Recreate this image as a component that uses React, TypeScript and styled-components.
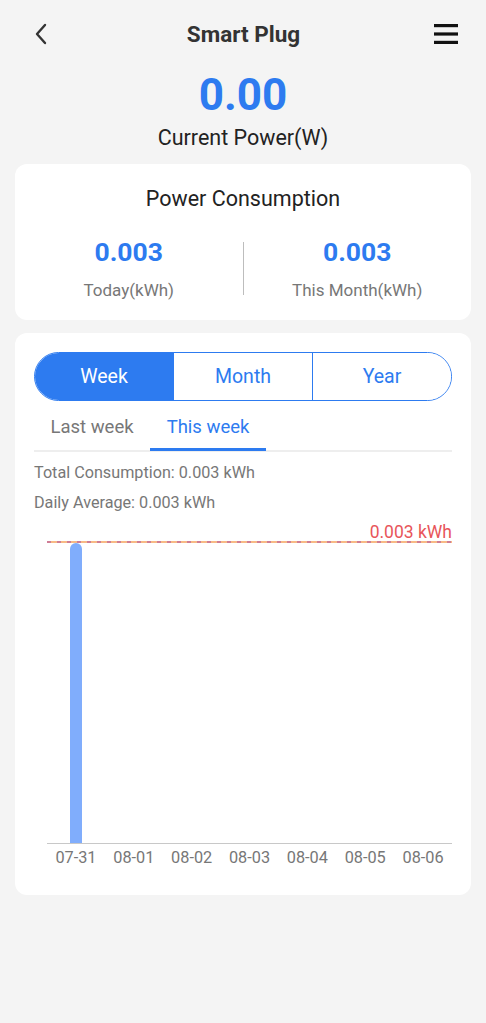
import React from "react";
import styled, { createGlobalStyle } from "styled-components";

const BLUE = "#2d7bf0";

const GlobalStyle = createGlobalStyle`
  html, body {
    margin: 0;
    padding: 0;
    background: #f4f4f4;
    font-family: Roboto, "Noto Sans", Arial, sans-serif;
  }
  * { box-sizing: border-box; }
`;

const days = ["07-31", "08-01", "08-02", "08-03", "08-04", "08-05", "08-06"];

const App: React.FC = () => {
  return (
    <Page>
      <GlobalStyle />
      <Header>
        <IconButton aria-label="back">
          <svg width="14" height="22" viewBox="0 0 14 22">
            <polyline
              points="11,2 3,11 11,20"
              fill="none"
              stroke="#333"
              strokeWidth="2.4"
              strokeLinecap="round"
              strokeLinejoin="round"
            />
          </svg>
        </IconButton>
        <Title>Smart Plug</Title>
        <IconButton aria-label="menu">
          <svg width="24" height="22" viewBox="0 0 24 22">
            <rect x="0" y="1" width="24" height="3.2" fill="#111" />
            <rect x="0" y="9.4" width="24" height="3.2" fill="#111" />
            <rect x="0" y="17.8" width="24" height="3.2" fill="#111" />
          </svg>
        </IconButton>
      </Header>

      <PowerBlock>
        <BigValue>0.00</BigValue>
        <PowerLabel>Current Power(W)</PowerLabel>
      </PowerBlock>

      <Card>
        <CardTitle>Power Consumption</CardTitle>
        <StatsRow>
          <Stat>
            <StatValue>0.003</StatValue>
            <StatLabel>Today(kWh)</StatLabel>
          </Stat>
          <Divider />
          <Stat>
            <StatValue>0.003</StatValue>
            <StatLabel>This Month(kWh)</StatLabel>
          </Stat>
        </StatsRow>
      </Card>

      <ChartCard>
        <Segmented>
          <Segment $active>Week</Segment>
          <Segment>Month</Segment>
          <Segment>Year</Segment>
        </Segmented>
        <TabBar>
          <Tab>Last week</Tab>
          <Tab $active>This week</Tab>
        </TabBar>
        <Info>
          <InfoLine>Total Consumption: 0.003 kWh</InfoLine>
          <InfoLine>Daily Average: 0.003 kWh</InfoLine>
        </Info>
        <Chart>
          <svg width="418" height="327" viewBox="0 0 418 327">
            <text
              x="418"
              y="20"
              textAnchor="end"
              fill="#e8555a"
              fontSize="17.5"
              fontFamily="Roboto, sans-serif"
            >
              0.003 kWh
            </text>
            <line x1="13" y1="24" x2="418" y2="24" stroke="#f4a35e" strokeWidth="1.5" />
            <line
              x1="13"
              y1="24"
              x2="418"
              y2="24"
              stroke="#c26a9c"
              strokeWidth="1.5"
              strokeDasharray="4 6"
            />
            <path d="M36 325 V31 a6 6 0 0 1 12 0 V325 Z" fill="#80adfc" />
            <line x1="13" y1="325.5" x2="418" y2="325.5" stroke="#c8c8c8" strokeWidth="1" />
          </svg>
          <Axis>
            {days.map((d) => (
              <AxisLabel key={d}>{d}</AxisLabel>
            ))}
          </Axis>
        </Chart>
      </ChartCard>
    </Page>
  );
};

export default App;

const Page = styled.div`
  width: 486px;
  min-height: 1023px;
  padding: 0 15px 40px;
  background: #f4f4f4;
`;

const Header = styled.div`
  height: 68px;
  display: flex;
  align-items: center;
  justify-content: space-between;
  padding: 0 11px 0 12px;
`;

const IconButton = styled.div`
  width: 28px;
  height: 28px;
  display: flex;
  align-items: center;
  justify-content: center;
`;

const Title = styled.div`
  font-size: 22.5px;
  font-weight: 700;
  color: #333;
`;

const PowerBlock = styled.div`
  display: flex;
  flex-direction: column;
  align-items: center;
  padding-top: 1px;
  margin-bottom: 13px;
`;

const BigValue = styled.div`
  font-size: 44px;
  font-weight: 700;
  line-height: 52px;
  color: ${BLUE};
`;

const PowerLabel = styled.div`
  margin-top: 4px;
  font-size: 21.5px;
  line-height: 26px;
  color: #222;
`;

const Card = styled.div`
  background: #fff;
  border-radius: 12px;
  padding: 23px 0 19px;
`;

const CardTitle = styled.div`
  text-align: center;
  font-size: 21.5px;
  line-height: 24px;
  color: #222;
  margin-bottom: 25px;
`;

const StatsRow = styled.div`
  display: flex;
  align-items: center;
`;

const Stat = styled.div`
  flex: 1;
  display: flex;
  flex-direction: column;
  align-items: center;
  gap: 11px;
`;

const StatValue = styled.div`
  font-size: 26.5px;
  font-weight: 700;
  line-height: 32px;
  color: ${BLUE};
`;

const StatLabel = styled.div`
  font-size: 17px;
  line-height: 22px;
  color: #777;
`;

const Divider = styled.div`
  width: 1px;
  height: 53px;
  background: #bdbdbd;
`;

const ChartCard = styled.div`
  margin-top: 13px;
  background: #fff;
  border-radius: 12px;
  padding: 19px 19px 26px;
`;

const Segmented = styled.div`
  display: flex;
  height: 49px;
  border: 1px solid ${BLUE};
  border-radius: 25px;
  overflow: hidden;
`;

const Segment = styled.div<{ $active?: boolean }>`
  flex: 1;
  display: flex;
  align-items: center;
  justify-content: center;
  font-size: 19.5px;
  color: ${(p) => (p.$active ? "#fff" : BLUE)};
  background: ${(p) => (p.$active ? BLUE : "#fff")};
  & + & {
    border-left: 1px solid ${BLUE};
  }
`;

const TabBar = styled.div`
  display: flex;
  margin-top: 5px;
  border-bottom: 2px solid #eeeeee;
`;

const Tab = styled.div<{ $active?: boolean }>`
  height: 45px;
  padding: 0 16.5px;
  line-height: 42px;
  font-size: 18.5px;
  color: ${(p) => (p.$active ? BLUE : "#777")};
  border-bottom: 3px solid ${(p) => (p.$active ? BLUE : "transparent")};
  margin-bottom: -1px;
`;

const Info = styled.div`
  margin-top: 6px;
`;

const InfoLine = styled.div`
  font-size: 16.2px;
  line-height: 30px;
  color: #777;
`;

const Chart = styled.div`
  display: flex;
  flex-direction: column;
  svg {
    display: block;
  }
`;

const Axis = styled.div`
  display: flex;
  padding-left: 13px;
  margin-top: 2px;
`;

const AxisLabel = styled.div`
  flex: 1;
  text-align: center;
  font-size: 16.3px;
  line-height: 22px;
  color: #777;
`;
